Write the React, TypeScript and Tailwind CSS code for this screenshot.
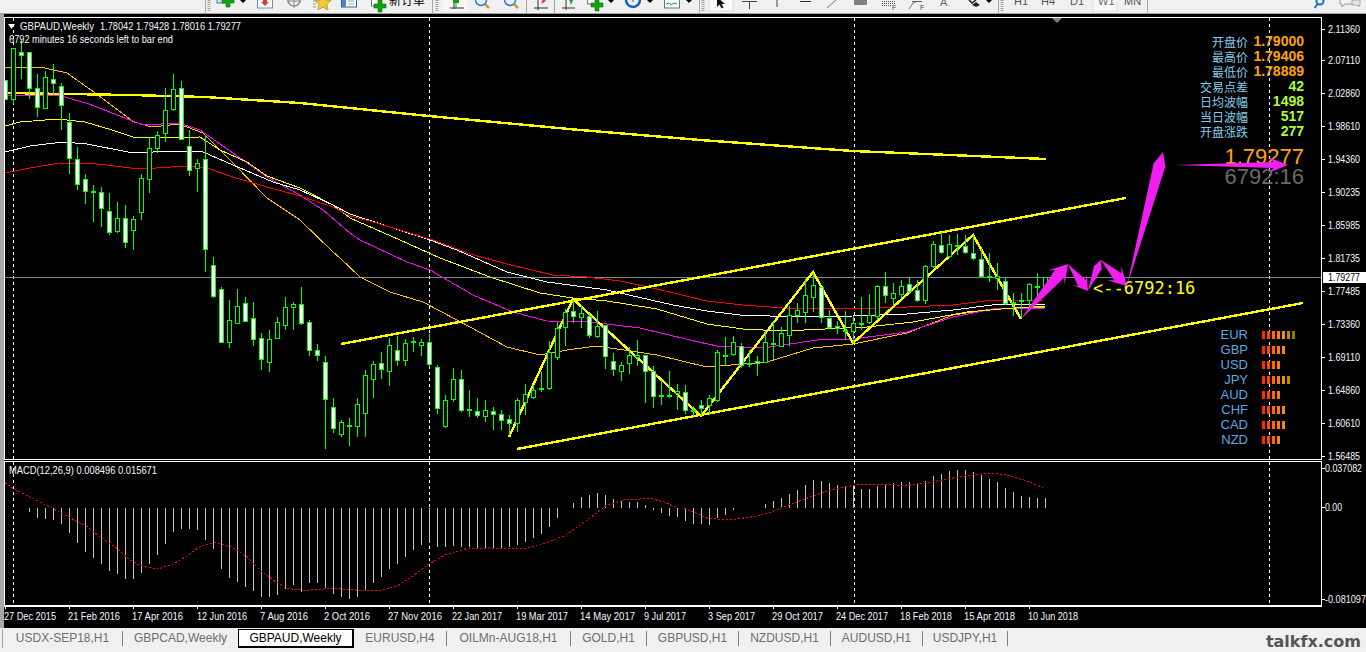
import React from "react";

const K: [number, number, number, number, number][] = [
  [80,99,80,99,1],[48,99,48,104,0],[52,55,40,79,1],[52,88,52,99,1],[88,107,74,117,1],[77,108,71,108,0],[79,83,64,95,1],[86,105,83,130,1],
  [122,158,113,174,1],[159,184,147,190,1],[179,191,174,204,1],[191,191,185,222,1],[192,208,187,227,1],[211,232,193,235,1],[218,231,202,233,0],[218,242,205,248,1],
  [219,230,216,250,0],[178,212,174,220,0],[148,179,137,193,0],[135,148,131,153,0],[110,133,88,142,0],[89,109,74,111,0],[88,139,81,139,1],[146,170,130,176,1],
  [163,168,159,192,0],[159,249,136,272,1],[265,296,257,298,1],[289,342,287,342,1],[320,342,300,348,0],[306,323,289,323,0],[303,321,297,322,1],[318,339,302,346,1],
  [338,359,333,370,1],[339,362,330,372,0],[322,338,317,338,0],[307,325,297,330,0],[304,307,302,330,0],[304,323,287,325,1],[322,350,320,356,1],[350,355,344,361,1],
  [362,399,356,449,1],[407,428,398,433,1],[422,434,420,437,0],[425,425,418,446,0],[404,426,398,437,0],[375,413,370,437,0],[364,379,361,398,0],[363,369,352,379,1],
  [345,371,338,386,0],[350,360,336,366,1],[343,360,339,366,0],[341,341,337,352,0],[342,345,339,356,0],[342,364,334,367,1],[367,408,365,414,1],[400,426,395,428,0],
  [379,399,368,402,0],[379,410,370,412,1],[409,409,390,417,0],[411,415,398,418,1],[410,416,400,422,0],[411,414,407,430,1],[414,420,410,430,1],[419,423,415,435,1],
  [400,423,398,432,0],[394,402,384,415,0],[390,397,385,399,0],[388,388,372,392,0],[352,388,341,390,0],[328,357,322,360,0],[312,327,309,346,0],[311,316,300,323,1],
  [313,317,305,328,0],[316,335,313,338,1],[326,336,311,338,0],[325,356,325,369,1],[361,369,353,376,1],[365,371,362,381,0],[355,363,347,374,0],[355,357,340,366,0],
  [355,371,355,403,1],[371,396,366,408,1],[395,395,380,405,0],[395,395,371,398,0],[391,393,384,410,0],[392,410,385,414,1],[410,410,406,416,0],[405,408,400,416,1],
  [398,405,395,415,0],[352,400,350,402,0],[355,355,337,366,0],[342,354,336,356,0],[346,365,343,368,1],[363,363,350,367,0],[361,363,356,376,1],[342,362,331,362,0],
  [343,343,322,359,0],[333,346,327,346,0],[315,335,306,346,0],[310,315,303,323,0],[295,312,279,323,0],[285,297,273,312,0],[287,317,287,323,1],[318,327,310,329,1],
  [326,328,321,334,1],[330,330,311,340,0],[323,331,316,343,0],[323,323,297,330,0],[315,322,294,324,0],[286,316,285,320,0],[286,295,272,303,1],[293,298,283,306,0],
  [286,294,280,298,0],[284,291,277,293,1],[290,300,280,302,1],[266,300,265,304,0],[244,266,241,268,0],[245,252,232,254,1],[244,256,235,258,0],[245,245,234,255,0],
  [246,252,235,254,1],[253,258,235,260,1],[259,276,249,278,1],[276,276,253,282,0],[276,278,263,290,0],[281,303,277,305,1],[302,302,293,316,0],[300,300,293,318,0],
  [284,300,283,308,0],[286,286,273,296,0],[277,288,277,292,0],
];

const pts = (a: number[][]) => a.map((p) => p.join(",")).join(" ");

const RED = [[5,173],[30,168],[60,163],[97,164],[140,169],[187,166],[207,168],[233,177],[267,187],[300,196],[333,207],[350,216],[370,221],[400,230],[433,240],[470,254],[507,264],[553,275],[587,277],[620,281],[657,289],[707,301],[743,305],[783,308],[853,309],[907,307],[953,305],[993,300],[1043,300]];
const WHITE = [[5,152],[30,146],[63,142],[87,144],[133,153],[173,151],[203,152],[233,165],[273,182],[300,190],[333,205],[350,214],[430,240],[457,250],[507,272],[547,282],[607,290],[673,305],[707,311],[740,315],[800,317],[853,316],[907,314],[953,310],[1000,304],[1045,304]];
const YEL = [[5,126],[20,122],[58,119],[85,122],[112,130],[133,137],[157,138],[200,137],[220,150],[247,162],[267,176],[300,188],[333,205],[350,218],[400,240],[440,258],[490,277],[540,293],[573,298],[607,301],[657,309],[707,324],[743,329],[783,331],[867,327],[913,322],[967,312],[1013,308],[1045,306]];
const MAG = [[5,95],[58,95],[89,104],[143,125],[179,123],[200,130],[233,153],[267,177],[300,195],[323,210],[350,233],[360,240],[407,262],[430,270],[473,295],[513,312],[547,321],[590,322],[640,328],[690,340],[717,346],[763,348],[817,340],[853,339],[907,332],[953,317],[993,309],[1045,308]];
const ORG = [[5,67],[45,68],[67,73],[98,95],[134,122],[152,127],[179,124],[203,133],[233,163],[267,198],[300,220],[333,252],[340,258],[360,277],[390,292],[423,302],[457,320],[507,347],[540,355],[567,350],[597,346],[657,355],[707,367],[767,362],[813,348],[853,344],[907,333],[953,315],[993,309],[1045,307]];
const TOPY = [[5,93],[130,95],[205,97],[300,103],[429,116],[580,130],[700,140],[853,151],[1046,159]];
const ZIG = [[509,437],[573,299],[701,416],[813,272],[853,343],[973,235],[1021,319]];

const GRID = [13, 429, 854, 1269];

const arrow = (x1: number, y1: number, x2: number, y2: number, hl: number, hw: number, sw: number) => {
  const d = Math.hypot(x2 - x1, y2 - y1);
  const ux = (x2 - x1) / d, uy = (y2 - y1) / d;
  const px = -uy, py = ux;
  const bx = x2 - ux * hl, by = y2 - uy * hl;
  const ix = x2 - ux * hl * 0.72, iy = y2 - uy * hl * 0.72;
  return pts([
    [x1, y1],
    [ix + px * sw, iy + py * sw],
    [bx + px * hw, by + py * hw],
    [x2, y2],
    [bx - px * hw, by - py * hw],
    [ix - px * sw, iy - py * sw],
  ]);
};

const ARROWS = [
  arrow(1021, 319, 1068, 264, 18, 11, 6),
  arrow(1068, 264, 1088, 291, 14, 9, 5),
  arrow(1088, 291, 1101, 260, 12, 6, 4),
  arrow(1101, 260, 1127, 286, 18, 10, 5),
  arrow(1127, 286, 1163, 152, 20, 9, 6),
  arrow(1175, 165, 1288, 165, 20, 8, 3),
];

const HIST: number[] = [
  143,143,143,156,174,177,180,192,218,250,275,293,312,333,342,357,356,338,312,285,252,215,207,207,210,240,268,326,353,365,380,393,411,410,405,388,375,395,368,370,385,402,410,416,410,390,368,350,327,312,290,270,255,248,262,262,258,262,262,268,268,267,265,260,255,245,235,222,202,173,145,128,110,105,98,105,118,122,125,125,135,150,158,168,172,
  183,192,193,195,175,165,150,145,143,143,132,123,113,102,90,75,60,62,68,74,77,76,86,86,77,75,70,65,65,68,62,48,42,33,30,30,37,44,57,66,84,96,108,111,114,114,
];

const SIG1 = [[12,68],[30,85],[60,105],[105,135],[150,165],[200,200],[235,235],[270,265],[300,300],[320,315],[360,328],[395,315],[430,290],[460,262],[495,247],[530,258],[570,290],[600,330],[630,360],[660,385],[700,391],[770,385],[830,391],[880,390],[920,375],[950,350],[990,312],[1030,282],[1080,265],[1130,264],[1210,265],[1260,248],[1300,228],[1350,185],[1400,135],[1440,120],[1500,115],[1530,125],[1560,141]].map(([u, v]) => [Math.round(u / 2.306), 460 + v / 3]);
const SIG2 = [[10,145],[40,160],[65,175],[110,180],[170,170],[210,155],[250,135],[300,110],[350,88],[400,75],[450,73],[520,76],[580,65],[640,50],[700,40],[740,43],[790,62],[835,85]].map(([u, v]) => [Math.round(680 + u / 2.286), 460 + v / 3]);

const PRICES: [string, number][] = [["2.11360",29],["2.07110",60],["2.02860",93],["1.98610",126],["1.94360",159],["1.90235",192],["1.85985",225],["1.81735",258],["1.77485",291],["1.73360",324],["1.69110",357],["1.64860",390],["1.60610",423],["1.56485",456]];

const DATES: [string, number, number][] = [["27 Dec 2015",4,52],["21 Feb 2016",68,52],["17 Apr 2016",132,51],["12 Jun 2016",197,50],["7 Aug 2016",260,48],["2 Oct 2016",324,46],["27 Nov 2016",388,54],["22 Jan 2017",452,50],["19 Mar 2017",516,52],["14 May 2017",580,55],["9 Jul 2017",644,42],["3 Sep 2017",708,47],["29 Oct 2017",772,51],["24 Dec 2017",836,52],["18 Feb 2018",900,52],["15 Apr 2018",964,51],["10 Jun 2018",1028,50]];

const STATS: [string, string, string][] = [
  ["开盘价","1.79000","text-[#ffa500]"],["最高价","1.79406","text-[#ffa500]"],["最低价","1.78889","text-[#ffa500]"],
  ["交易点差","42","text-[#adff2f]"],["日均波幅","1498","text-[#adff2f]"],["当日波幅","517","text-[#adff2f]"],["开盘涨跌","277","text-[#adff2f]"],
];

const BAR_COLORS = ["bg-[#ff2a00]","bg-[#ff4500]","bg-[#ff6a00]","bg-[#ff8000]","bg-[#f09000]","bg-[#b89000]","bg-[#808000]"];
const CUR: [string, number][] = [["EUR",7],["GBP",5],["USD",4],["JPY",6],["AUD",4],["CHF",5],["CAD",5],["NZD",4]];

const TABS: [string, string][] = [
  ["USDX-SEP18,H1","w-[120px] border-r"],
  ["GBPCAD,Weekly","w-[115px]"],
  ["GBPAUD,Weekly","w-[116px]"],
  ["EURUSD,H4","w-[93px] border-r"],
  ["OILMn-AUG18,H1","w-[124px] border-r"],
  ["GOLD,H1","w-[76px] border-r"],
  ["GBPUSD,H1","w-[92px] border-r"],
  ["NZDUSD,H1","w-[92px] border-r"],
  ["AUDUSD,H1","w-[92px] border-r"],
  ["USDJPY,H1","w-[85px] border-r"],
];

const Lbl = ({ x, y, w, fill = "#f4f8fc", size = 11, children }: { x: number; y: number; w: number; fill?: string; size?: number; children: React.ReactNode }) => (
  <text x={x} y={y} fontSize={size} fill={fill} textLength={w} lengthAdjust="spacingAndGlyphs">{children}</text>
);

const Grip = ({ x }: { x: number }) => (
  <line x1={x} y1={0} x2={x} y2={11} stroke="#a0a0a0" strokeWidth={3} strokeDasharray="1 1" />
);
const Sep = ({ x }: { x: number }) => <line x1={x} y1={0} x2={x} y2={13} stroke="#a8a8a8" />;
const Drop = ({ x }: { x: number }) => <polygon points={`${x - 3},0 ${x + 3},0 ${x},3`} fill="#000" />;
const Plus = ({ x, y }: { x: number; y: number }) => (
  <path d={`M${x - 2} ${y - 6}h4v4h4v4h-4v4h-4v-4h-4v-4h4z`} fill="#12a312" stroke="#0b6b0b" strokeWidth={0.6} />
);

function Toolbar() {
  return (
    <div className="flex h-[14px] overflow-hidden border-b border-[#a0a0a0] bg-[#f0f0f0]">
      <svg className="ml-[205px] block shrink-0" width={495} height={13} viewBox="205 0 495 13" fontFamily="'Noto Sans CJK SC',sans-serif">
        <Sep x={205.5} />
        <Grip x={209} />
        <rect x={217} y={-4} width={11} height={7} fill="#cfe2f5" stroke="#3f7fbf" />
        <Plus x={228} y={1} />
        <Drop x={243} />
        <rect x={257.5} y={-4} width={15} height={12} fill="#fff" stroke="#6f8fb5" />
        <path d="M263 0h4v2h2l-4 4-4-4h2z" fill="#d0402a" />
        <circle cx={294} cy={0} r={6} fill="none" stroke="#8a8a8a" strokeWidth={1.5} />
        <path d="M294 -2v10M287 1h14" stroke="#8a8a8a" />
        <polygon points="323,-5 325.5,0 331,0.5 327,4.5 328,10 323,7.2 318,10 319,4.5 315,0.5 320.5,0" fill="#f2c83a" stroke="#b58a1a" strokeWidth={0.7} />
        <path d="M313 1h3M313 4h3M313 7h3" stroke="#9a9a9a" />
        <rect x={341.5} y={-4} width={15} height={11} fill="#fff" stroke="#2a66aa" />
        <rect x={342} y={-4} width={4} height={11} fill="#4a86c8" />
        <path d="M348 1h6M348 4h6" stroke="#8aa8c8" />
        <rect x={371.5} y={-4} width={10} height={10} fill="#fff" stroke="#777" />
        <Plus x={380} y={6} />
        <text x={389} y={5} fontSize={12} fill="#000">新订单</text>
        <Sep x={432.5} />
        <Grip x={437} />
        <rect x={443} y={-1} width={24} height={12} fill="#f8f8f8" />
        <path d="M450 8h14M454 1v8" stroke="#333" />
        <rect x={453} y={-3} width={6} height={6} fill="#1a9a1a" />
        <path d="M456 3v6" stroke="#1a9a1a" />
        <circle cx={481} cy={0} r={5.5} fill="#dff0ff" stroke="#3a78c0" strokeWidth={1.5} />
        <path d="M485 4l4 4" stroke="#c89a30" strokeWidth={2.5} />
        <circle cx={510} cy={0} r={5.5} fill="#dff0ff" stroke="#3a78c0" strokeWidth={1.5} />
        <path d="M514 4l4 4" stroke="#c89a30" strokeWidth={2.5} />
        <Sep x={526.5} />
        <path d="M534 8h14M538 0v10" stroke="#333" />
        <path d="M541 4l2-5 3 2z" fill="#d0402a" />
        <Sep x={554.5} />
        <path d="M562 8h13M566 0v10" stroke="#333" />
        <path d="M571 5l-2-6 4 1z" fill="#2a9a2a" />
        <rect x={587.5} y={-4} width={10} height={8} fill="#fff" stroke="#777" />
        <Plus x={597} y={5} />
        <Drop x={611} />
        <circle cx={633} cy={0} r={7} fill="#e8eef5" stroke="#1a5fb4" strokeWidth={2.5} />
        <path d="M633 -2v4" stroke="#555" />
        <Drop x={650} />
        <rect x={664.5} y={-3} width={15} height={11} fill="#fff" stroke="#4a78a8" />
        <path d="M666 4l3-1 2 2 3-2 3 1" fill="none" stroke="#2a9a2a" />
        <Drop x={689} />
        <Sep x={699.5} />
      </svg>
      <svg className="block shrink-0" width={450} height={13} viewBox="700 0 450 13" fontFamily="'Liberation Sans',sans-serif">
        <Grip x={703} />
        <rect x={709} y={-1} width={24} height={12} fill="#fafafa" stroke="#e0e0e0" />
        <path d="M717 -3v10l2.500-2.500 2 4 2-1-2-3.500h3.500z" fill="#111" />
        <path d="M742 1.500h15M749.500 2v7" stroke="#444" />
        <path d="M777 0v7" stroke="#444" />
        <path d="M800 1.500h11" stroke="#333" />
        <path d="M836 0l-9 8" stroke="#777" />
        <rect x={854} y={-2} width={13} height={7} rx={1} fill="#808080" />
        <path d="M882 1.500h13M882 3.500h13M882 5.500h9" stroke="#555" strokeDasharray="1 1" />
        <text x={892} y={10} fontSize={7} fill="#444">F</text>
        <path d="M909 9l4-6 3-1M912 1.500h10" stroke="#666" fill="none" strokeDasharray="1 0" />
        <text x={920} y={10} fontSize={7} fill="#444">F</text>
        <text x={940} y={6} fontSize={11} fill="#666">A</text>
        <path d="M969 0l3 3 4-3" stroke="#222" strokeWidth={1.5} fill="none" />
        <polygon points="976,2 980,5 976,7 972,5" fill="#222" />
        <Drop x={989} />
        <Sep x={998.5} />
        <Grip x={1002} />
        <text x={1014} y={5} fontSize={11} fill="#555">H1</text>
        <text x={1041} y={5} fontSize={11} fill="#555">H4</text>
        <text x={1070} y={5} fontSize={11} fill="#555">D1</text>
        <rect x={1093} y={-1} width={24} height={12} fill="#f9f9f9" stroke="#e0e0e0" />
        <text x={1098} y={5} fontSize={11} fill="#666">W1</text>
        <text x={1124} y={5} fontSize={11} fill="#555">MN</text>
        <Sep x={1147.5} />
      </svg>
      <svg className="ml-auto block shrink-0" width={56} height={13} viewBox="1310 0 56 13">
        <circle cx={1320} cy={1} r={3.5} fill="none" stroke="#1a6fd0" strokeWidth={2} />
        <path d="M1317.500 4l-3 4" stroke="#1a6fd0" strokeWidth={2} />
        <path d="M1340 -2h14v6h-9l-3 3v-3h-2z" fill="#f4f4f4" stroke="#9a9a9a" />
        <path d="M1352 0h8v5h-1v2l-2-2h-5z" fill="#e4e4e4" stroke="#a8a8a8" />
      </svg>
    </div>
  );
}

function Candles() {
  return (
    <g shapeRendering="crispEdges">
      {K.map(([t, b, hi, lo, w], k) => {
        const x = 5 + 8 * k;
        return (
          <g key={k}>
            <rect x={x} y={hi} width={1} height={lo - hi} fill="#00ff00" />
            {t === b ? (
              <rect x={x - 2} y={t} width={5} height={2} fill="#00ff00" />
            ) : (
              <>
                <rect x={x - 2} y={t} width={5} height={b - t + 1} fill="#00ff00" />
                <rect x={x - 1} y={t + 1} width={3} height={Math.max(b - t - 1, 0)} fill={w ? "#ffffff" : "#000000"} />
              </>
            )}
          </g>
        );
      })}
    </g>
  );
}

function MainPane() {
  return (
    <div className="relative h-[443px] border border-white">
      <svg className="block" width={1316} height={441} viewBox="5 18 1316 441" fontFamily="'Liberation Sans',sans-serif">
        <g shapeRendering="crispEdges">
          {GRID.map((x) => (
            <line key={x} x1={x + 0.5} y1={18} x2={x + 0.5} y2={459} stroke="#fff" strokeDasharray="3 3" />
          ))}
          <line x1={5} y1={277.5} x2={1321} y2={277.5} stroke="#808890" />
          <polyline points={pts(ORG)} fill="none" stroke="#ffc000" />
          <polyline points={pts(MAG)} fill="none" stroke="#ff00ff" />
          <polyline points={pts(YEL)} fill="none" stroke="#ffff00" />
          <polyline points={pts(WHITE)} fill="none" stroke="#ffffff" />
          <polyline points={pts(RED)} fill="none" stroke="#ff0000" />
          <polyline points={pts(TOPY)} fill="none" stroke="#ffff00" strokeWidth={2.4} />
          <line x1={341} y1={344} x2={1126} y2={198} stroke="#ffff00" strokeWidth={2.4} />
          <line x1={517} y1={449} x2={1303} y2={303} stroke="#ffff00" strokeWidth={2.4} />
          <polyline points={pts(ZIG)} fill="none" stroke="#ffff00" strokeWidth={2.4} />
        </g>
        <Candles />
        <polygon points="8,24 15,24 11.500,29" fill="#fff" />
        <Lbl x={20} y={30} w={74}>GBPAUD,Weekly</Lbl>
        <Lbl x={100} y={30} w={141}>1.78042 1.79428 1.78016 1.79277</Lbl>
        <Lbl x={9} y={43} w={164}>6792 minutes 16 seconds left to bar end</Lbl>
        <polygon points="1052,18 1062,18 1057,23" fill="#708090" />
        <text x={1093} y={294} fontSize={17} fill="#ffff00" fontFamily="'DejaVu Sans Mono',monospace">{"<--6792:16"}</text>
      </svg>

      <div className="absolute right-[17px] top-[16px] flex flex-col items-end font-['Liberation_Sans','Noto_Sans_CJK_SC',sans-serif]">
        {STATS.map(([l, v, c]) => (
          <div key={l} className="grid h-[15px] w-[104px] grid-cols-[48px_56px] items-center">
            <span className="whitespace-nowrap text-right font-['Noto_Sans_CJK_SC',sans-serif] text-[12px] leading-[15px] text-[#87ceeb]">{l}</span>
            <span className={`text-right text-[14px] font-bold leading-[15px] ${c}`}>{v}</span>
          </div>
        ))}
        <div className="mt-[8px] text-[22px] leading-[20px] text-[#ffa500]">1.79277</div>
        <div className="text-[22px] leading-[20px] text-[#696969]">6792:16</div>
      </div>

      <div className="absolute left-[1205px] top-[309px] flex flex-col font-['Liberation_Sans',sans-serif]">
        {CUR.map(([c, n]) => (
          <div key={c} className="flex h-[15px] items-center gap-[14px]">
            <span className="w-[38px] text-right text-[13px] leading-[15px] text-[#5fa8e0]">{c}</span>
            <div className="flex gap-[2px]">
              {BAR_COLORS.slice(0, n).map((b) => (
                <span key={b} className={`h-[8px] w-[3px] ${b}`} />
              ))}
            </div>
          </div>
        ))}
      </div>

      <svg className="absolute left-0 top-0 block" width={1316} height={441} viewBox="5 18 1316 441">
        {ARROWS.map((p, i) => (
          <polygon key={i} points={p} fill="#f01ef0" />
        ))}
      </svg>
    </div>
  );
}

function SubPane() {
  return (
    <div className="mt-[1px] h-[146px] border border-b-2 border-white">
      <svg className="block" width={1316} height={143} viewBox="5 462 1316 143" fontFamily="'Liberation Sans',sans-serif">
        <g shapeRendering="crispEdges">
          {GRID.map((x) => (
            <line key={x} x1={x + 0.5} y1={462} x2={x + 0.5} y2={605} stroke="#fff" strokeDasharray="3 3" />
          ))}
          {HIST.map((v, k) => {
            const y = 460 + v / 3;
            const x = 5.5 + 8 * k;
            return v === 143 ? null : <line key={k} x1={x} y1={507.5} x2={x} y2={y} stroke="#c0c0c0" />;
          })}
          <polyline points={pts(SIG1)} fill="none" stroke="#ff0000" strokeDasharray="2 2" />
          <polyline points={pts(SIG2)} fill="none" stroke="#ff0000" strokeDasharray="2 2" />
        </g>
        <Lbl x={9} y={474} w={148}>MACD(12,26,9) 0.008496 0.015671</Lbl>
      </svg>
    </div>
  );
}

function PriceAxis() {
  return (
    <svg className="block shrink-0" width={44} height={593} viewBox="1322 14 44 593" fontFamily="'Liberation Sans',sans-serif">
      <g shapeRendering="crispEdges">
        {[...PRICES.map((p) => p[1]), 468, 507, 599].map((y) => (
          <line key={y} x1={1322} y1={y + 0.5} x2={1325} y2={y + 0.5} stroke="#fff" />
        ))}
        <rect x={1323} y={272} width={43} height={11} fill="#fff" />
      </g>
      {PRICES.map(([t, y]) => (
        <Lbl key={t} x={1328} y={y + 4} w={32}>{t}</Lbl>
      ))}
      <Lbl x={1328} y={281} w={32} fill="#000">1.79277</Lbl>
      <Lbl x={1325} y={472} w={37}>0.037082</Lbl>
      <Lbl x={1325} y={511} w={17}>0.00</Lbl>
      <Lbl x={1325} y={603} w={41}>-0.081097</Lbl>
    </svg>
  );
}

function DateAxis() {
  return (
    <svg className="block shrink-0" width={1362} height={21} viewBox="4 607 1362 21" fontFamily="'Liberation Sans',sans-serif">
      <g shapeRendering="crispEdges">
        {DATES.map(([d], i) => (
          <line key={d} x1={5.5 + 64 * i} y1={607} x2={5.5 + 64 * i} y2={609} stroke="#fff" />
        ))}
      </g>
      {DATES.map(([d, x, w]) => (
        <Lbl key={d} x={x} y={620} w={w}>{d}</Lbl>
      ))}
    </svg>
  );
}

function Tabs() {
  return (
    <div className="flex h-[24px] items-start bg-[#f0f0f0] pl-[2px] pt-[1px] font-['Liberation_Sans',sans-serif] text-[12px]">
      <div className="flex h-[19px] items-stretch border-l border-[#a8a8a8]">
        {TABS.map(([t, w], i) =>
          i === 2 ? (
            <div key={t} className={`flex items-center justify-center border border-b-2 border-r-2 border-black bg-white text-black ${w}`}>{t}</div>
          ) : (
            <div key={t} className={`my-[2px] flex items-center justify-center border-[#808080] leading-[15px] text-[#6e6e6e] ${w}`}>{t}</div>
          ),
        )}
      </div>
      <div className="ml-auto mr-[5px] mt-[4px] font-['DejaVu_Sans',sans-serif] text-[16px] font-bold leading-[18px] text-[#555555]">talkfx.com</div>
    </div>
  );
}

export default function App() {
  return (
    <div className="flex h-[652px] w-[1366px] flex-col overflow-hidden bg-[#f0f0f0]">
      <Toolbar />
      <div className="flex h-[614px] bg-black">
        <div className="w-[4px] shrink-0 bg-[#a8a8a8]" />
        <div className="flex min-w-0 flex-1 flex-col">
          <div className="flex">
            <div className="w-[1318px] shrink-0 pt-[3px]">
              <MainPane />
              <SubPane />
            </div>
            <PriceAxis />
          </div>
          <DateAxis />
        </div>
      </div>
      <Tabs />
    </div>
  );
}
